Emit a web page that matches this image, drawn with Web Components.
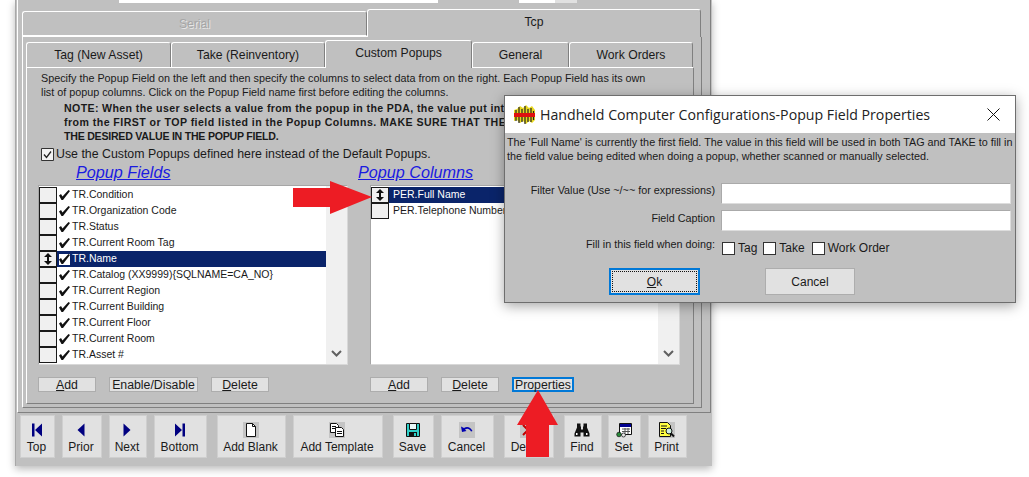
<!DOCTYPE html>
<html>
<head>
<meta charset="utf-8">
<title>Popup Field Properties</title>
<style>
    html, body { margin: 0; background: #fff; }
    body { height: 477px; overflow: hidden; position: relative; font-family: "Liberation Sans", Arial, sans-serif; color: #1a1a1a; }
</style>
</head>
<body>
<app-window>
    <tab-panel outer style="width:680px;margin:6px 0 0 4px">
        <win-tab slot="tabs" disabled style="width:345px;height:25px">Serial</win-tab>
        <win-tab slot="tabs" active style="width:334px;height:27px">Tcp</win-tab>
        <tab-panel style="width:668px">
            <win-tab slot="tabs" style="width:145px;height:25px">Tag (New Asset)</win-tab>
            <win-tab slot="tabs" style="width:154px;height:25px">Take (Reinventory)</win-tab>
            <win-tab slot="tabs" active style="width:147px;height:27px">Custom Popups</win-tab>
            <win-tab slot="tabs" style="width:97px;height:25px">General</win-tab>
            <win-tab slot="tabs" style="width:124px;height:25px">Work Orders</win-tab>
            <popups-page>
                <list-box slot="fields">
                    <list-row check>TR.Condition</list-row>
                    <list-row check>TR.Organization Code</list-row>
                    <list-row check>TR.Status</list-row>
                    <list-row check>TR.Current Room Tag</list-row>
                    <list-row check selected>TR.Name</list-row>
                    <list-row check>TR.Catalog (XX9999){SQLNAME=CA_NO}</list-row>
                    <list-row check>TR.Current Region</list-row>
                    <list-row check>TR.Current Building</list-row>
                    <list-row check>TR.Current Floor</list-row>
                    <list-row check>TR.Current Room</list-row>
                    <list-row check>TR.Asset #</list-row>
                </list-box>
                <list-box slot="columns">
                    <list-row selected>PER.Full Name</list-row>
                    <list-row>PER.Telephone Number</list-row>
                </list-box>
                <push-btn slot="fieldBtns" style="width:58px"><u>A</u>dd</push-btn>
                <push-btn slot="fieldBtns" style="width:89px">Enable/Disable</push-btn>
                <push-btn slot="fieldBtns" style="width:58px"><u>D</u>elete</push-btn>
                <push-btn slot="columnBtns" style="width:58px"><u>A</u>dd</push-btn>
                <push-btn slot="columnBtns" style="width:58px"><u>D</u>elete</push-btn>
                <push-btn slot="columnBtns" focus style="width:62px">Properties</push-btn>
            </popups-page>
        </tab-panel>
    </tab-panel>
    <tool-bar slot="toolbar">
        <tool-btn label="Top" style="width:35px"><svg width="16" height="16" viewBox="0 0 16 16"><path fill="#000080" d="M3 1.500h2.500v13H3zM13 1.500v13L6 8z"/></svg></tool-btn>
        <tool-btn label="Prior" style="width:40px;margin-left:7px"><svg width="16" height="16" viewBox="0 0 16 16"><path fill="#000080" d="M11.500 1.500v13L4.500 8z"/></svg></tool-btn>
        <tool-btn label="Next" style="width:38px;margin-left:7px"><svg width="16" height="16" viewBox="0 0 16 16"><path fill="#000080" d="M4.500 1.500v13l7-6.500z"/></svg></tool-btn>
        <tool-btn label="Bottom" style="width:53px;margin-left:7px"><svg width="16" height="16" viewBox="0 0 16 16"><path fill="#000080" d="M3 1.500v13L10 8zM10.500 1.500H13v13h-2.500z"/></svg></tool-btn>
        <tool-btn label="Add Blank" style="width:69px;margin-left:10px"><svg width="16" height="16" viewBox="0 0 16 16"><path fill="#c4c4c4" d="M0 0h16v16H0z"/><path fill="#fff" stroke="#111" d="M3.500 1.500h6l3 3v10h-9z"/><path fill="none" stroke="#111" d="M9.500 1.500v3h3"/></svg></tool-btn>
        <tool-btn label="Add Template" style="width:90px;margin-left:7px"><svg width="16" height="16" viewBox="0 0 16 16"><path fill="#c4c4c4" d="M0 0h16v16H0z"/><path fill="#fff" stroke="#111" d="M1.500 1.500h6l2 2v7h-8z"/><path fill="#fff" stroke="#111" d="M6.500 5.500h6l2 2v7h-8z"/><path stroke="#111" d="M3 4.500h4M3 6.500h3M8 9.500h5M8 11.500h5"/></svg></tool-btn>
        <tool-btn label="Save" style="width:41px;margin-left:10px"><svg width="16" height="16" viewBox="0 0 16 16"><path fill="#30d0c8" stroke="#111" d="M1.500 1.500h13v13h-13z"/><path fill="#e8fafa" stroke="#111" d="M4.500 1.500h7v6h-7z"/><path fill="#111" d="M4 10h8v4.500H4z"/><path fill="#30d0c8" d="M9 11h2v3H9z"/></svg></tool-btn>
        <tool-btn label="Cancel" style="width:53px;margin-left:7px"><svg width="16" height="16" viewBox="0 0 16 16"><path fill="#c4c4c4" d="M0 0h16v16H0z"/><path fill="#0000b0" d="M2 4.500l1 5.500 4.500-1-1.500-1.500c2-1.500 4.500-1 6 2l1.500-.500C11.500 5 8 4 5 6z"/></svg></tool-btn>
        <tool-btn label="Delete" style="width:50px;margin-left:10px"><svg width="16" height="16" viewBox="0 0 16 16"><path fill="#c4c4c4" d="M0 0h16v16H0z"/><path stroke="#c00000" stroke-width="2" d="M3 3l10 10M13 3L3 13"/></svg></tool-btn>
        <tool-btn label="Find" style="width:38px;margin-left:10px"><svg width="16" height="16" viewBox="0 0 16 16"><path fill="#111" d="M3 1.500h3.500v3H7v3h2v-3h.500v-3H13v4l2.500 6v3h-6v-4H6.500v4h-6v-3L3 5.500z"/><path fill="#fff" d="M2 11h1.500v2H2zM12 11h1.500v2H12z"/></svg></tool-btn>
        <tool-btn label="Set" style="width:33px;margin-left:6px"><svg width="16" height="16" viewBox="0 0 16 16"><path fill="#fff" stroke="#111" d="M3.500 1.500h12v11h-12z"/><path fill="#000090" d="M4 2h11v3H4z"/><path stroke="#555" d="M6 7h8M6 9.500h8M9 6v6M12 6v6"/><circle cx="3" cy="12.500" r="2.300" fill="#2a8a3a" stroke="#111" stroke-width=".7"/><circle cx="7.500" cy="13" r="2" fill="#e8e8e8" stroke="#111" stroke-width=".7"/></svg></tool-btn>
        <tool-btn label="Print" style="width:39px;margin-left:7px"><svg width="16" height="16" viewBox="0 0 16 16"><path fill="#c4c4c4" d="M0 0h16v16H0z"/><path fill="#ffff40" stroke="#111" d="M.5.500h8l3 3v11h-11z"/><path stroke="#111" d="M2 4h6M2 6.500h5M2 9h3M2 11.500h3"/><circle cx="10" cy="9" r="3" fill="#d0f0e0" stroke="#111"/><path stroke="#111" stroke-width="2" d="M12 11.500l3 3"/></svg></tool-btn>
    </tool-bar>
</app-window>

<config-dialog style="left:504px;top:95px"></config-dialog>

<red-arrow style="left:293px;top:181px">
    <svg width="79" height="33" viewBox="0 0 79 33"><path fill="#ed1c24" d="M0 7h37V0l42 16-42 17v-7H0z"/></svg>
</red-arrow>
<red-arrow style="left:517px;top:390px">
    <svg width="41" height="67" viewBox="0 0 41 67"><path fill="#ed1c24" d="M21 0l20 35H32v32H9V35H0z"/></svg>
</red-arrow>

<script>
class AppWindow extends HTMLElement {
    constructor() {
        super();
        this.attachShadow({ mode: 'open' });
        this.shadowRoot.innerHTML = `
            <style>
                :host {
                    display: block;
                    width: 697px;
                    height: 466px;
                    margin-left: 15px;
                    background: #c0c0c0;
                    box-sizing: border-box;
                    border-left: 1px solid #a8a8a8;
                    box-shadow: 0 3px 8px rgba(0,0,0,0.28);
                }
                .frame {
                    box-sizing: border-box;
                    width: 694px;
                    height: 413px;
                    margin-left: 1px;
                    border-left: 1px solid #fff;
                    border-right: 1px solid #808080;
                    border-bottom: 1px solid #808080;
                }
                .strip { display: flex; height: 3px; padding-left: 101px; }
                .strip i { display: block; height: 3px; background: #fff; }
            </style>
            <div class="frame">
                <div class="strip">
                    <i style="width:319px"></i>
                    <i style="width:36px;margin-left:81px"></i>
                    <i style="width:22px;background:#e1e1e1"></i>
                </div>
                <slot></slot>
            </div>
            <slot name="toolbar"></slot>
        `;
    }
}

class TabPanel extends HTMLElement {
    constructor() {
        super();
        this.attachShadow({ mode: 'open' });
        this.shadowRoot.innerHTML = `
            <style>
                :host {
                    display: flex;
                    flex-direction: column;
                    box-sizing: border-box;
                    height: 364px;
                }
                :host([outer]) {
                    height: 399px;
                }
                .tabs { display: flex; align-items: flex-end; height: 27px; flex: none; }
                .body {
                    box-sizing: border-box;
                    flex: 1;
                    border-top: 1px solid #fff;
                    border-left: 1px solid #fff;
                    border-right: 1px solid #808080;
                    border-bottom: 1px solid #808080;
                }
                :host([outer]) .body { padding: 3px 0 0 3px; }
            </style>
            <div class="tabs"><slot name="tabs"></slot></div>
            <div class="body"><slot></slot></div>
        `;
    }
}

class WinTab extends HTMLElement {
    constructor() {
        super();
        this.attachShadow({ mode: 'open' });
        this.shadowRoot.innerHTML = `
            <style>
                :host {
                    display: flex;
                    align-items: center;
                    justify-content: center;
                    box-sizing: border-box;
                    flex: none;
                    font-size: 12.2px;
                    color: #1a1a1a;
                    background: #c0c0c0;
                    border-top: 1px solid #fff;
                    border-left: 1px solid #fff;
                    border-right: 1px solid #808080;
                    border-radius: 3px 3px 0 0;
                }
                :host([active]) {
                    position: relative;
                    z-index: 1;
                    margin-bottom: -1px;
                    padding-bottom: 3px;
                    height: 28px !important;
                }
                :host([disabled]) {
                    color: #a6a6a6;
                    text-shadow: 1px 1px 0 #e6e6e6;
                    border-bottom: 1px solid #fff;
                }
            </style>
            <slot></slot>
        `;
    }
}

class PopupsPage extends HTMLElement {
    constructor() {
        super();
        this.attachShadow({ mode: 'open' });
        this.shadowRoot.innerHTML = `
            <style>
                :host {
                    display: block;
                    padding: 3px 0 0 14px;
                    font-size: 10.8px;
                    color: #1a1a1a;
                }
                .line { height: 14px; line-height: 14px; white-space: nowrap; }
                .note { margin: 2px 0 0 23px; font-weight: bold; font-size: 10.6px; }
                .use {
                    display: flex;
                    align-items: center;
                    gap: 2px;
                    height: 14px;
                    margin-top: 4px;
                    font-size: 12.35px;
                    white-space: nowrap;
                }
                .use svg { display: block; flex: none; }
                .titles { display: flex; height: 19px; margin: 2px 0 3px 35px; align-items: center; }
                .titles a {
                    flex: none;
                    font-size: 16.2px;
                    font-style: italic;
                    color: #1a1ae0;
                    text-decoration: underline;
                }
                .titles a:first-child { width: 282px; }
                .cols {
                    display: grid;
                    grid-template-columns: 310px 310px;
                    column-gap: 22px;
                    margin-left: -3px;
                }
                .btns { display: flex; gap: 13px; margin-top: 12px; }
            </style>
            <div class="line">Specify the Popup Field on the left and then specify the columns to select data from on the right. Each Popup Field has its own</div>
            <div class="line">list of popup columns. Click on the Popup Field name first before editing the columns.</div>
            <div class="note">
                <div class="line" style="letter-spacing:.37px">NOTE: When the user selects a value from the popup in the PDA, the value put into</div>
                <div class="line" style="letter-spacing:.45px">from the FIRST or TOP field listed in the Popup Columns. MAKE SURE THAT THE FIRST</div>
                <div class="line" style="letter-spacing:-.24px">THE DESIRED VALUE IN THE POPUP FIELD.</div>
            </div>
            <div class="use">
                <svg width="13" height="13" viewBox="0 0 13 13"><path fill="#f2f2f2" stroke="#333" d="M.5.500h12v12H.5z"/><path fill="none" stroke="#222" stroke-width="1.300" d="M3 6.500l2.500 3L10 3.500"/></svg>
                <span>Use the Custom Popups defined here instead of the Default Popups.</span>
            </div>
            <div class="titles"><a>Popup Fields</a><a>Popup Columns</a></div>
            <div class="cols">
                <slot name="fields"></slot>
                <slot name="columns"></slot>
                <div class="btns"><slot name="fieldBtns"></slot></div>
                <div class="btns"><slot name="columnBtns"></slot></div>
            </div>
        `;
    }
}

class ListBox extends HTMLElement {
    constructor() {
        super();
        this.attachShadow({ mode: 'open' });
        this.shadowRoot.innerHTML = `
            <style>
                :host {
                    display: flex;
                    box-sizing: border-box;
                    height: 180px;
                    background: #fff;
                    border: 1px solid #a6a6a6;
                    border-right-color: #d8d8d8;
                    border-bottom-color: #d8d8d8;
                }
                .rows { flex: 1; min-width: 0; padding-top: 1px; overflow: hidden; }
                .bar {
                    flex: none;
                    width: 21px;
                    background: #f0f0f0;
                    display: flex;
                    align-items: flex-end;
                    justify-content: center;
                    padding-bottom: 7px;
                    box-sizing: border-box;
                }
                .bar svg { display: block; }
            </style>
            <div class="rows"><slot></slot></div>
            <div class="bar"><svg width="11" height="7" viewBox="0 0 11 7"><path fill="none" stroke="#606060" stroke-width="2" d="M1 1l4.500 4.500L10 1"/></svg></div>
        `;
    }
}

class ListRow extends HTMLElement {
    constructor() {
        super();
        this.attachShadow({ mode: 'open' });
        const check = this.hasAttribute('check');
        const selected = this.hasAttribute('selected');
        const grip = selected ? '<svg width="10" height="12" viewBox="0 0 10 12"><path fill="#111" d="M5 0l4 4H6v4h3l-4 4-4-4h3V4H1z"/></svg>' : '';
        const mark = check ? '<span class="mark"><svg width="11" height="10" viewBox="0 0 11 10"><path fill="#111" d="M0 5.500l2-1.500 1.500 2.500L9.500 0 11 1 4 10H2.500z"/></svg></span>' : '';
        this.shadowRoot.innerHTML = `
            <style>
                :host {
                    display: flex;
                    height: 16px;
                    font-size: 10.5px;
                    color: #1a1a1a;
                    white-space: nowrap;
                }
                .box {
                    box-sizing: border-box;
                    flex: none;
                    width: 18px;
                    height: 16px;
                    background: #f0f0f0;
                    border: 1px solid #1a1a1a;
                    display: flex;
                    align-items: center;
                    justify-content: center;
                }
                .box svg, .mark svg { display: block; }
                .text {
                    box-sizing: border-box;
                    flex: 1;
                    display: flex;
                    align-items: center;
                    min-width: 0;
                    padding-left: ${check ? '2px' : '4px'};
                    padding-bottom: 2px;
                }
                :host([selected]) .text { background: #0a246a; color: #fff; }
                .mark {
                    flex: none;
                    width: 11px;
                    height: 11px;
                    margin: 2px 2px 0 0;
                    display: block;
                }
                :host([selected]) .mark { background: #fff; }
            </style>
            <div class="box">${grip}</div>
            <div class="text">${mark}<slot></slot></div>
        `;
    }
}

class PushBtn extends HTMLElement {
    constructor() {
        super();
        this.attachShadow({ mode: 'open' });
        this.shadowRoot.innerHTML = `
            <style>
                :host {
                    display: flex;
                    align-items: center;
                    justify-content: center;
                    box-sizing: border-box;
                    flex: none;
                    height: 15px;
                    font-size: 12.3px;
                    color: #1a1a1a;
                    background: #e1e1e1;
                    border: 1px solid #adadad;
                    white-space: nowrap;
                }
                :host([focus]) { border: 2px solid #0078d7; }
            </style>
            <slot></slot>
        `;
    }
}

class ToolBar extends HTMLElement {
    constructor() {
        super();
        this.attachShadow({ mode: 'open' });
        this.shadowRoot.innerHTML = `
            <style>
                :host { display: flex; height: 43px; margin: 2px 0 0 4px; }
            </style>
            <slot></slot>
        `;
    }
}

class ToolBtn extends HTMLElement {
    constructor() {
        super();
        this.attachShadow({ mode: 'open' });
        this.shadowRoot.innerHTML = `
            <style>
                :host {
                    display: flex;
                    flex-direction: column;
                    align-items: center;
                    box-sizing: border-box;
                    flex: none;
                    height: 43px;
                    padding: 6px 2px 0 0;
                    background: #e1e1e1;
                    border: 1px solid #cfcfcf;
                    font-size: 12px;
                    color: #1a1a1a;
                    white-space: nowrap;
                }
                .icon { height: 16px; }
                ::slotted(svg) { display: block; }
                .label { margin-top: 2px; line-height: 15px; }
            </style>
            <div class="icon"><slot></slot></div>
            <div class="label">${this.getAttribute('label')}</div>
        `;
    }
}

class ConfigDialog extends HTMLElement {
    constructor() {
        super();
        this.attachShadow({ mode: 'open' });
        this.shadowRoot.innerHTML = `
            <style>
                :host {
                    position: absolute;
                    display: block;
                    box-sizing: border-box;
                    width: 512px;
                    height: 208px;
                    background: #c0c0c0;
                    border: 1px solid #6e6e6e;
                    box-shadow: 0 3px 12px rgba(0,0,0,0.35);
                    color: #1a1a1a;
                    font-size: 10.8px;
                }
                .title {
                    display: flex;
                    align-items: center;
                    height: 37px;
                    background: #fff;
                    padding-left: 9px;
                    font-family: "Open Sans", "Noto Sans", sans-serif;
                    font-size: 14.16px;
                    color: #222;
                    white-space: nowrap;
                }
                .title svg { display: block; flex: none; }
                .title span { margin-left: 5px; flex: 1; }
                .title .close { margin-right: 15px; }
                .msg { padding: 2px 0 0 2px; line-height: 14px; white-space: nowrap; height: 28px; }
                .form {
                    display: grid;
                    grid-template-columns: 210px 290px;
                    column-gap: 6px;
                    margin-top: 20px;
                }
                .form label { text-align: right; line-height: 13px; white-space: nowrap; }
                .form .inp {
                    box-sizing: border-box;
                    height: 21px;
                    background: #fff;
                    border: 1px solid #aaa;
                    border-right-color: #ddd;
                    border-bottom-color: #ddd;
                    margin-bottom: 6px;
                }
                .checks { display: flex; align-items: center; height: 14px; margin-top: 4px; font-size: 12px; white-space: nowrap; }
                .checks i {
                    display: block;
                    box-sizing: border-box;
                    width: 13px;
                    height: 13px;
                    background: #fff;
                    border: 1px solid #333;
                    margin-left: 1px;
                    flex: none;
                }
                .checks span { margin-left: 3px; }
                .acts { display: flex; margin: 13px 0 0 104px; }
                .acts div {
                    display: flex;
                    align-items: center;
                    justify-content: center;
                    box-sizing: border-box;
                    height: 27px;
                    background: #e1e1e1;
                    border: 1px solid #adadad;
                    font-size: 12px;
                }
                .acts .ok { width: 91px; border: 2px solid #0078d7; outline: 1px dotted #111; outline-offset: -4px; }
                .acts .no { width: 90px; margin-left: 65px; }
            </style>
            <div class="title">
                <svg width="21" height="20" viewBox="0 0 21 20">
                    <path fill="#e8d820" d="M0 5l3-1 3-3 3 2 3-3 3 3 3-2 3 4v10l-3 3-3-2-3 3-3-3-3 2-3-3-3 1z"/>
                    <path stroke="#222" stroke-width="1.200" d="M2 5v11M5 2v16M8 4v13M11 1v18M14 4v13M17 3v14M19.500 6v9"/>
                    <path fill="#e01010" d="M0 8h21v4H0z"/>
                </svg>
                <span>Handheld Computer Configurations-Popup Field Properties</span>
                <svg class="close" width="13" height="13" viewBox="0 0 13 13"><path stroke="#111" fill="none" d="M.5.500l12 12M12.500.500l-12 12"/></svg>
            </div>
            <div class="msg">The 'Full Name' is currently the first field. The value in this field will be used in both TAG and TAKE to fill in<br>the field value being edited when doing a popup, whether scanned or manually selected.</div>
            <div class="form">
                <label style="line-height:14px">Filter Value (Use ~/~~ for expressions)</label><div class="inp"></div>
                <label style="line-height:17px">Field Caption</label><div class="inp"></div>
                <label style="margin-top:1px">Fill in this field when doing:</label>
                <div class="checks">
                    <i></i><span>Tag</span>
                    <i style="margin-left:6px"></i><span>Take</span>
                    <i style="margin-left:7px"></i><span>Work Order</span>
                </div>
            </div>
            <div class="acts">
                <div class="ok"><span><u>O</u>k</span></div>
                <div class="no">Cancel</div>
            </div>
        `;
    }
}

class RedArrow extends HTMLElement {
    constructor() {
        super();
        this.attachShadow({ mode: 'open' });
        this.shadowRoot.innerHTML = `
            <style>
                :host { position: absolute; display: block; z-index: 5; line-height: 0; }
            </style>
            <slot></slot>
        `;
    }
}

customElements.define('app-window', AppWindow);
customElements.define('tab-panel', TabPanel);
customElements.define('win-tab', WinTab);
customElements.define('popups-page', PopupsPage);
customElements.define('list-box', ListBox);
customElements.define('list-row', ListRow);
customElements.define('push-btn', PushBtn);
customElements.define('tool-bar', ToolBar);
customElements.define('tool-btn', ToolBtn);
customElements.define('config-dialog', ConfigDialog);
customElements.define('red-arrow', RedArrow);
</script>
</body>
</html>
